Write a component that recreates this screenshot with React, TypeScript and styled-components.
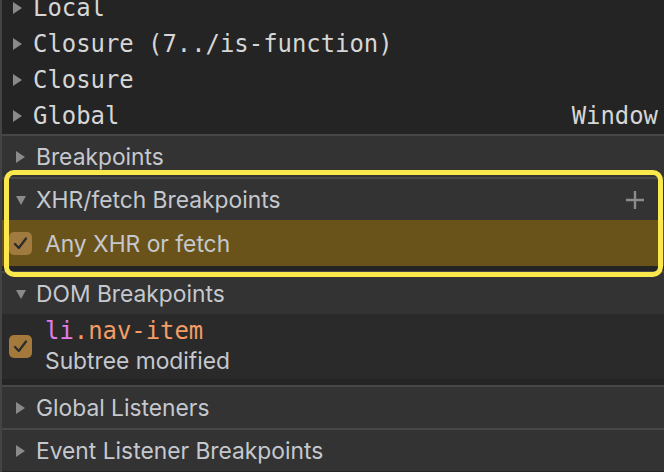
import styled, { createGlobalStyle } from 'styled-components'

const GlobalStyle = createGlobalStyle`
  html, body {
    margin: 0;
    padding: 0;
    background: #242424;
    overflow: hidden;
  }
`

const Panel = styled.div`
  position: relative;
  width: 662px;
  height: 472px;
  overflow: hidden;
  background: #242424;
  border-left: 2px solid #444;
  font-family: Inter, 'Liberation Sans', Arial, sans-serif;
`

const ScopeList = styled.div`
  margin-top: -10px;
`

const ScopeRow = styled.div`
  display: flex;
  align-items: center;
  height: 36px;
  padding: 0 6px 0 8px;
  font-family: 'DejaVu Sans Mono', Menlo, monospace;
  font-size: 23.9px;
  color: #d6d6d6;
  white-space: nowrap;
`

const ScopeName = styled.span`
  flex: 1;
`

const Caret = styled.span<{ $open?: boolean }>`
  display: inline-block;
  width: 0;
  height: 0;
  flex: none;
  ${(p) =>
    p.$open
      ? `
    border-left: 5.5px solid transparent;
    border-right: 5.5px solid transparent;
    border-top: 9px solid #8a8a8a;
    margin: 2px 10px 0 3px;
  `
      : `
    border-top: 6px solid transparent;
    border-bottom: 6px solid transparent;
    border-left: 9px solid #8a8a8a;
    margin: 0 11px 0 3px;
  `}
`

const Section = styled.div`
  border-top: 2px solid #474747;
`

const SectionHeader = styled.div`
  display: flex;
  align-items: center;
  height: 41px;
  padding: 0 20px 0 11px;
  background: #333333;
  color: #c5c8ce;
  font-size: 22.8px;
`

const HeaderTitle = styled.span`
  flex: 1;
`

const AddButton = styled.span`
  display: flex;
  align-items: center;
`

const SectionBody = styled.div<{ $pad: number }>`
  background: #242424;
  padding-bottom: ${(p) => p.$pad}px;
`

const BreakpointRow = styled.div<{ $highlight?: boolean }>`
  display: flex;
  align-items: center;
  gap: 13px;
  padding: 0 8px 0 7px;
  min-height: ${(p) => (p.$highlight ? '46px' : '45px')};
  background: ${(p) => (p.$highlight ? '#6a531a' : '#2a2a2a')};
  color: #c5c8ce;
  font-size: 22.8px;
`

const Checkbox = styled.span<{ $tone: string }>`
  display: flex;
  align-items: center;
  justify-content: center;
  width: 23px;
  height: 23px;
  flex: none;
  border-radius: 5px;
  background: ${(p) => p.$tone};
`

const DomEntry = styled.div`
  display: flex;
  flex-direction: column;
  padding: 3px 0 4px;
  line-height: 29px;
`

const Selector = styled.span`
  font-family: 'DejaVu Sans Mono', Menlo, monospace;
  font-size: 23.9px;
  color: #f29d66;
`

const TagName = styled.span`
  color: #e47ce8;
`

const Highlight = styled.div`
  position: absolute;
  left: 2px;
  top: 170px;
  width: 649px;
  height: 97px;
  border: 5px solid #fbe84c;
  border-radius: 10px;
  pointer-events: none;
`

const scopes = [
  { name: 'Local' },
  { name: 'Closure (7../is-function)' },
  { name: 'Closure' },
  { name: 'Global', value: 'Window' },
]

function Check({ tone }: { tone: string }) {
  return (
    <Checkbox $tone={tone}>
      <svg width="15" height="13" viewBox="0 0 15 13">
        <path d="M2 7 L5.8 11 L13 1.5" fill="none" stroke="#2b2b2b" strokeWidth="2.2" strokeLinecap="round" strokeLinejoin="round" />
      </svg>
    </Checkbox>
  )
}

export default function App() {
  return (
    <Panel>
      <GlobalStyle />
      <ScopeList>
        {scopes.map((s) => (
          <ScopeRow key={s.name}>
            <Caret />
            <ScopeName>{s.name}</ScopeName>
            {s.value && <span>{s.value}</span>}
          </ScopeRow>
        ))}
      </ScopeList>

      <Section>
        <SectionHeader>
          <Caret />
          <HeaderTitle>Breakpoints</HeaderTitle>
        </SectionHeader>
      </Section>

      <Section>
        <SectionHeader>
          <Caret $open />
          <HeaderTitle>XHR/fetch Breakpoints</HeaderTitle>
          <AddButton>
            <svg width="18" height="18" viewBox="0 0 18 18">
              <path d="M9 0 V18 M0 9 H18" stroke="#8c8c8c" strokeWidth="2.4" />
            </svg>
          </AddButton>
        </SectionHeader>
        <SectionBody $pad={5}>
          <BreakpointRow $highlight>
            <Check tone="#a07a3f" />
            <span>Any XHR or fetch</span>
          </BreakpointRow>
        </SectionBody>
      </Section>

      <Section>
        <SectionHeader>
          <Caret $open />
          <HeaderTitle>DOM Breakpoints</HeaderTitle>
        </SectionHeader>
        <SectionBody $pad={6}>
          <BreakpointRow>
            <Check tone="#a47a3c" />
            <DomEntry>
              <Selector>
                <TagName>li</TagName>.nav-item
              </Selector>
              <span>Subtree modified</span>
            </DomEntry>
          </BreakpointRow>
        </SectionBody>
      </Section>

      <Section>
        <SectionHeader>
          <Caret />
          <HeaderTitle>Global Listeners</HeaderTitle>
        </SectionHeader>
      </Section>

      <Section>
        <SectionHeader>
          <Caret />
          <HeaderTitle>Event Listener Breakpoints</HeaderTitle>
        </SectionHeader>
      </Section>

      <Highlight />
    </Panel>
  )
}
